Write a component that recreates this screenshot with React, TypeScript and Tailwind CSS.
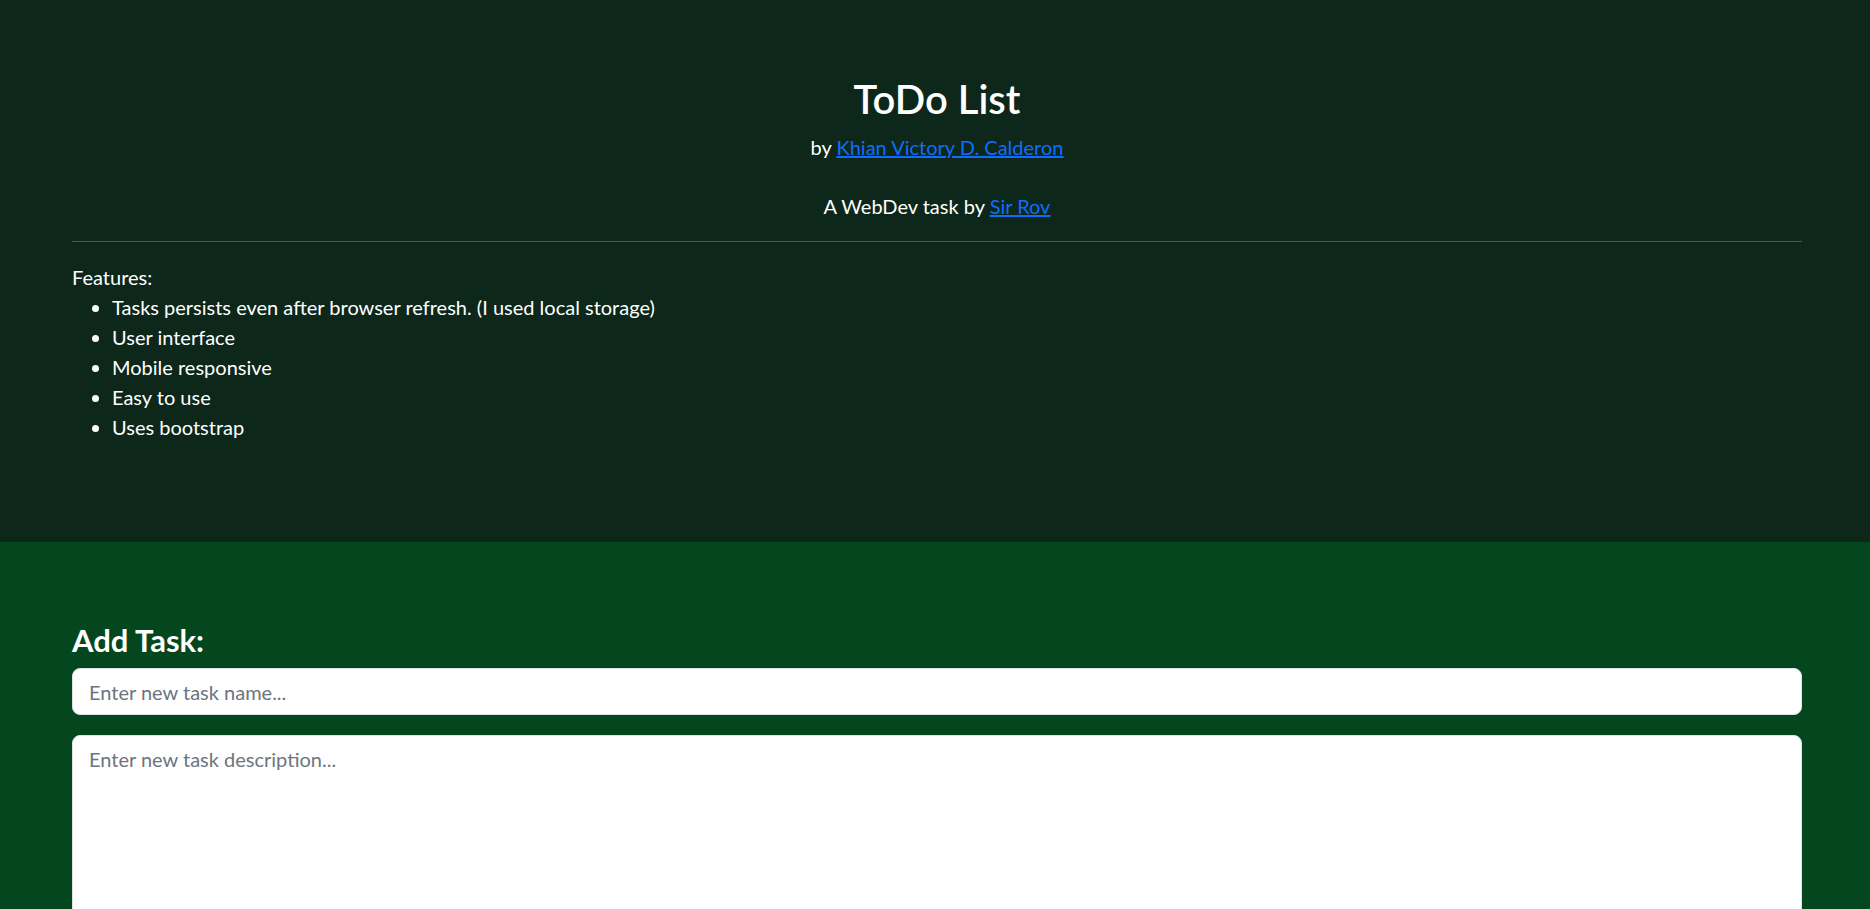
import { useState } from 'react'

const features = [
  'Tasks persists even after browser refresh. (I used local storage)',
  'User interface',
  'Mobile responsive',
  'Easy to use',
  'Uses bootstrap',
]

const App = () => {
  const [name, setName] = useState('')
  const [desc, setDesc] = useState('')

  return (
    <div className="h-[909px] overflow-hidden font-['Lato','Noto_Sans',sans-serif] text-[20px] leading-[30px]">
      {/* Header */}
      <section className="h-[542px] bg-[#0d271a] text-white pl-[72px] pr-[68px] pt-[75px]">
        <h1 className="text-center text-[40px] leading-[48px] font-semibold">ToDo List</h1>
        <p className="text-center mt-[9px]">
          by{' '}
          <a href="#" className="text-[#0d6efd] underline">
            Khian Victory D. Calderon
          </a>
        </p>
        <p className="text-center mt-[29px]">
          A WebDev task by{' '}
          <a href="#" className="text-[#0d6efd] underline">
            Sir Rov
          </a>
        </p>
        <hr className="mt-[20px] border-0 border-t border-white/25" />
        <div className="mt-[20px]">
          <p>Features:</p>
          <ul className="list-disc pl-[40px]">
            {features.map((f, i) => (
              <li key={i}>{f}</li>
            ))}
          </ul>
        </div>
      </section>

      {/* Add task */}
      <section className="bg-[#04471e] pl-[72px] pr-[68px] pt-[80px] pb-[40px]">
        <h2 className="text-white text-[31px] leading-[36px] font-bold">Add Task:</h2>
        <input
          value={name}
          onChange={(e) => setName(e.target.value)}
          placeholder="Enter new task name..."
          className="mt-[10px] block w-full h-[47px] bg-white rounded-lg border border-[#dee2e6] px-4 text-[20px] text-[#212529] placeholder:text-[#6c757d] outline-none"
        />
        <textarea
          value={desc}
          onChange={(e) => setDesc(e.target.value)}
          placeholder="Enter new task description..."
          className="mt-[20px] block w-full h-[260px] bg-white rounded-lg border border-[#dee2e6] px-4 py-[8px] text-[20px] leading-[30px] text-[#212529] placeholder:text-[#6c757d] outline-none resize-none"
        />
      </section>
    </div>
  )
}

export default App
